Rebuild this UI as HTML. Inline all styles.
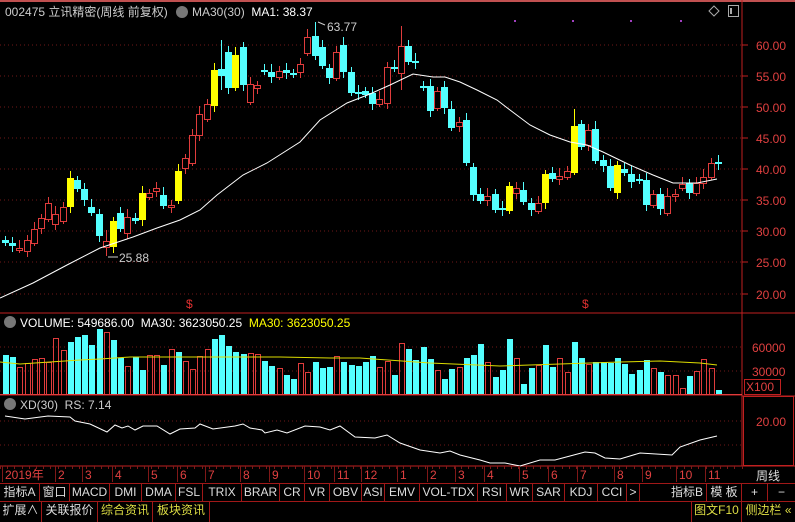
<!DOCTYPE html>
<html><head><meta charset="utf-8">
<style>
*{margin:0;padding:0;box-sizing:border-box}
body{width:795px;height:522px;background:#000;overflow:hidden;font-family:"Liberation Sans","Noto Sans CJK SC",sans-serif;position:relative}
svg{position:absolute;left:0;top:0}
.t{position:absolute;font-size:12px;white-space:nowrap;line-height:14px}
.bar{position:absolute;left:0;width:795px;height:18px;border-top:1px solid #a01818;display:flex}
.bar div{border-right:1px solid #a01818;color:#ddd;font-size:12px;line-height:17px;white-space:nowrap;text-align:center;overflow:hidden;flex:none}
</style></head><body>
<svg id="s" width="795" height="522" xmlns="http://www.w3.org/2000/svg"></svg>
<div class="t" style="left:5px;top:5px;color:#ccc">002475 立讯精密(周线 前复权)</div>
<div class="t" style="left:176px;top:6px;width:12px;height:12px;border-radius:6px;background:#777"></div>
<div class="t" style="left:192px;top:5px;color:#ccc">MA30(30)&nbsp; <span style="color:#fff">MA1: 38.37</span></div>
<div class="t" style="left:327px;top:20px;color:#ccc">63.77</div>
<div class="t" style="left:119px;top:251px;color:#ccc">25.88</div>
<div class="t" style="left:4px;top:316px;width:12px;height:12px;border-radius:6px;background:#777"></div>
<div class="t" style="left:20px;top:316px;color:#fff">VOLUME: 549686.00&nbsp; MA30: 3623050.25&nbsp; <span style="color:#ff0">MA30: 3623050.25</span></div>
<div class="t" style="left:4px;top:398px;width:12px;height:12px;border-radius:6px;background:#777"></div>
<div class="t" style="left:20px;top:398px;color:#ccc">XD(30)&nbsp; RS: 7.14</div>
<div class="bar" style="top:483px">
<div style="width:40px">指标A</div><div style="width:30px">窗口</div><div style="width:40px">MACD</div><div style="width:32px">DMI</div><div style="width:34px">DMA</div><div style="width:27px">FSL</div><div style="width:39px">TRIX</div><div style="width:38px">BRAR</div><div style="width:25px">CR</div><div style="width:25px">VR</div><div style="width:32px">OBV</div><div style="width:23px">ASI</div><div style="width:35px">EMV</div><div style="width:58px">VOL-TDX</div><div style="width:29px">RSI</div><div style="width:26px">WR</div><div style="width:32px">SAR</div><div style="width:33px">KDJ</div><div style="width:29px">CCI</div><div style="width:13px">&gt;</div><div style="width:67px;text-align:right;padding-right:3px">指标B</div><div style="width:35px">模 板</div><div style="width:26px">+</div><div style="width:27px;border:0">−</div>
</div>
<div class="bar" style="top:501px;height:21px">
<div style="width:42px">扩展∧</div><div style="width:56px">关联报价</div><div style="width:55px;color:#dd4">综合资讯</div><div style="width:57px;color:#dd4">板块资讯</div><div style="width:482px"></div><div style="width:50px;color:#dd4">图文F10</div><div style="width:53px;color:#dd4;border:0">侧边栏 «</div>
</div>
<script>
var s=document.getElementById('s'),h='';
function L(x1,y1,x2,y2,c,w,d){h+='<line x1="'+x1+'" y1="'+y1+'" x2="'+x2+'" y2="'+y2+'" stroke="'+c+'" stroke-width="'+(w||1)+'"'+(d?' stroke-dasharray="'+d+'"':'')+'/>';}
function T(x,y,t,c,a){h+='<text x="'+x+'" y="'+y+'" fill="'+c+'" font-size="12" font-family="Liberation Sans,Noto Sans CJK SC,sans-serif"'+(a?' text-anchor="'+a+'"':'')+'>'+t+'</text>';}
var R='#c02020';
h+='<rect x="0" y="0" width="795" height="2" fill="#c05050"/>';
[[60,45],[55,76],[50,107],[45,138],[40,169],[35,200],[30,231],[25,262],[20,294]].forEach(function(p){L(0,p[1],742,p[1],'#701818',1,'1 3');L(742,p[1],748,p[1],R);T(756,p[1]+5,p[0]+'.00','#e04040');});
L(742,0,742,466,R);L(0,313,795,313,R);L(0,395,742,395,R);L(742,396,795,396,R);L(0,466,795,466,R);
L(0,347,742,347,'#701818',1,'1 3');L(0,371,742,371,'#701818',1,'1 3');
T(752,352,'60000','#e04040');T(752,376,'30000','#e04040');
h+='<rect x="744.5" y="379.5" width="36" height="15" fill="none" stroke="'+R+'"/>';T(746,391,'X100','#e04040');
L(0,421,742,421,'#701818',1,'1 3');L(0,445,742,445,'#701818',1,'1 3');T(756,426,'20.00','#e04040');
h+='<rect x="743.5" y="396.5" width="50" height="69" fill="none" stroke="'+R+'"/>';
h+='<path d="M714 6 L719 11 L714 16 L709 11Z" fill="none" stroke="#aaa"/><rect x="728.5" y="5.5" width="10" height="11" fill="none" stroke="#aaa"/><rect x="730" y="8" width="2" height="6" fill="#aaa"/>';
[[514,20],[572,20],[630,20],[680,20]].forEach(function(p){h+='<rect x="'+p[0]+'" y="'+p[1]+'" width="2" height="2" fill="#a040c0"/>';});
T(186,308,'$','#e03030');T(582,308,'$','#e03030');
var c=[['c',240,243],['c',243,246],['r',248,250],['r',240,251],['r',229,243],['r',218,228],['r',203,219],['r',214,224],['r',207,221],['y',178,207],['c',180,189],['c',189,200],['c',207,213],['c',214,236],['r',241,247,230,256],['y',221,247],['c',213,229],['r',217,233],['c',218,221],['y',193,220],['r',193,197],['r',188,191],['c',195,206],['r',205,207],['y',171,201],['r',158,168],['r',135,163],['r',114,135],['r',104,119],['y',70,106],['c',69,76,40,90],['c',52,88],['y',55,88],['c',47,85],['r',84,102],['r',85,88],['c',70,72],['c',72,77],['r',71,77],['c',70,73],['c',73,75],['r',64,72],['r',37,53],['c',36,56,22,60],['c',47,66],['c',68,78],['r',52,78],['c',45,72],['c',72,93],['c',92,94],['c',91,95],
['c',93,104],['r',99,104],['r',67,103],['c',67,69],['r',46,73,26,90],['c',46,62],['c',61,63],['c',86,88],['c',86,111],['r',91,108],['c',87,108],['c',109,128],['r',122,126],['c',120,163],['c',167,195],['c',194,201],['r',196,200],['c',194,210],['c',208,210],['y',186,211],['r',188,193],['c',190,202],['c',203,210],['r',203,211],['y',174,203],['c',173,179],['r',176,179],['r',171,177],['y',126,173,109,175],['c',124,147],['r',130,145],['c',129,161],['c',160,166],['c',166,188],['y',165,193],['c',169,173],['c',174,182],['c',179,181],['c',180,205],['r',194,205],['c',194,209],['r',196,213],['r',194,196],['r',184,188],['c',183,193],['r',183,193],['r',177,183],['r',163,177],['c',162,164]];
var col={c:'#54ffff',y:'#ffff00',r:'#e03c3c'};
c.forEach(function(k,i){var x=Math.round(5+i*7.2),hi=k[3]||k[1]-4-(i*7%5),lo=k[4]||k[2]+3+(i*3%6);
L(x+0.5,hi,x+0.5,lo,col[k[0]]);
if(k[0]=='r')h+='<rect x="'+(x-2.5)+'" y="'+(k[1]+.5)+'" width="6" height="'+Math.max(1,k[2]-k[1])+'" fill="#000" stroke="'+col.r+'"/>';
else h+='<rect x="'+(x-3)+'" y="'+k[1]+'" width="7" height="'+Math.max(2,k[2]-k[1])+'" fill="'+col[k[0]]+'"/>';});
h+='<polyline fill="none" stroke="#fff" points="0,298 33,283 67,265 100,248 133,237 157,228 180,220 200,210 217,195 243,175 267,163 300,142 320,120 347,103 370,94 390,85 413,74 433,77 445,77 460,82 477,90 497,100 510,110 530,125 550,135 570,142 587,145 603,152 630,165 653,175 673,183 697,183 717,179"/>';
L(108,257,118,257,'#ccc');L(318,22,325,25,'#ccc');
var v=[355,357,367,363,359,358,362,338,350,342,337,335,345,329,332,340,358,366,357,370,355,355,365,349,352,361,369,356,349,339,335,346,352,354,353,354,361,366,368,375,379,363,372,362,368,367,356,362,365,366,362,356,367,361,375,343,349,360,347,359,370,379,369,367,358,355,344,362,377,370,339,358,384,368,365,345,367,358,372,342,358,364,362,362,363,358,364,374,370,360,368,372,375,375,388,376,371,359,368,390];
v.forEach(function(t,i){var x=Math.round(3+i*7.2),k=c[i][0];
if(k=='r')h+='<rect x="'+(x+.5)+'" y="'+(t+.5)+'" width="5" height="'+(394-t)+'" fill="none" stroke="#e03c3c"/>';
else h+='<rect x="'+x+'" y="'+t+'" width="6" height="'+(395-t)+'" fill="#54ffff"/>';});
L(0,394.5,742,394.5,'#e03c3c');
h+='<polyline fill="none" stroke="#dddd00" points="0,362 20,364 50,362 80,360 100,359 130,357 200,357 280,357 330,358 360,358 430,363 500,366 530,365 560,364 620,362 660,361 700,363 717,365"/>';
h+='<polyline fill="none" stroke="#fff" points="5,416 25,419 48,416 70,417 75,421 90,424 107,432 115,425 122,428 128,426 135,430 143,426 157,426 170,434 180,429 195,428 200,424 213,429 235,426 243,424 250,428 262,430 265,433 277,430 287,433 305,426 320,427 330,430 340,426 355,437 375,438 387,435 400,443 420,450 440,453 450,451 460,455 480,460 490,463 505,463 520,466 540,460 555,460 570,456 585,452 595,453 605,458 620,459 640,453 672,455 680,447 700,440 717,436"/>';
for(var x=0;x<742;x+=7.2)L(Math.round(x)+.5,466,Math.round(x)+.5,469,'#801818');
[['2019年',5],['2',58],['3',85],['4',115],['5',151],['6',180],['7',208],['8',243],['9',272],['10',307],['11',337],['12',364],['1',400],['2',430],['3',458],['4',487],['5',522],['6',551],['7',580],['8',617],['9',645],['10',679],['11',708]].forEach(function(d){L(d[1]-2.5,466,d[1]-2.5,482,'#801818');T(d[1],479,d[0],'#e04040');});
T(768,480,'周线','#ddd','middle');
s.innerHTML=h;
</script>
</body></html>
